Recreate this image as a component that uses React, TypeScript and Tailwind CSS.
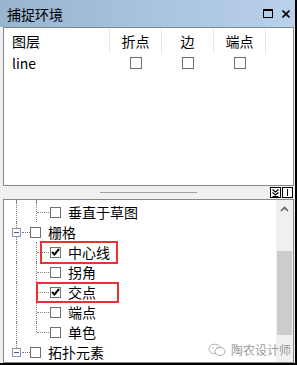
type TreeItem = {
  label: string;
  level: 1 | 2;
  checked?: boolean;
  lastChild?: boolean;
  lastRoot?: boolean;
};

const TREE_ITEMS: Array<TreeItem> = [
  { label: '垂直于草图', level: 2 },
  { label: '栅格', level: 1 },
  { label: '中心线', level: 2, checked: true },
  { label: '拐角', level: 2 },
  { label: '交点', level: 2, checked: true },
  { label: '端点', level: 2 },
  { label: '单色', level: 2, lastChild: true },
  { label: '拓扑元素', level: 1, lastRoot: true },
];

const FONT = "font-['Noto_Sans_CJK_SC','Noto_Sans',sans-serif]";

function CheckBox({ checked, size }: { checked?: boolean; size: 'sm' | 'md' }) {
  return (
    <span
      className={`flex shrink-0 items-center justify-center border border-[#707070] bg-white ${
        size === 'md' ? 'h-[12px] w-[12px]' : 'h-[11px] w-[11px]'
      }`}
    >
      {checked && (
        <svg width="9" height="8" viewBox="0 0 9 8">
          <path d="M1 4 L3.5 6.5 L8 1" fill="none" stroke="#000" strokeWidth="2" />
        </svg>
      )}
    </span>
  );
}

function MinusBox() {
  return (
    <span className="absolute left-[8px] top-[6px] flex h-[9px] w-[9px] items-center justify-center border border-[#8c99ad] bg-white">
      <span className="h-[1px] w-[5px] bg-[#3a5b95]" />
    </span>
  );
}

function TreeRow({ item }: { item: TreeItem }) {
  return (
    <div className="relative flex h-[20px] items-center">
      {/* guide lines */}
      <span
        className={`absolute left-[12px] top-0 border-l border-dotted border-[#808080] ${
          item.lastRoot ? 'h-[6px]' : 'h-[20px]'
        }`}
      />
      {item.level === 2 && (
        <>
          <span
            className={`absolute left-[32px] top-0 border-l border-dotted border-[#808080] ${
              item.lastChild ? 'h-[10px]' : 'h-[20px]'
            }`}
          />
          <span className="absolute left-[33px] top-[10px] w-[12px] border-t border-dotted border-[#808080]" />
        </>
      )}
      {item.level === 1 && (
        <>
          <MinusBox />
          <span className="absolute left-[18px] top-[10px] w-[8px] border-t border-dotted border-[#808080]" />
        </>
      )}
      <div className={`flex items-center ${item.level === 1 ? 'pl-[26px]' : 'pl-[46px]'}`}>
        <CheckBox checked={item.checked} size="sm" />
        <span className="ml-[7px] text-[14px] leading-none text-black">{item.label}</span>
      </div>
    </div>
  );
}

export default function App() {
  return (
    <div className={`flex h-[365px] w-[297px] flex-col border-b-2 border-r-2 border-black bg-[#f0f0f0] ${FONT}`}>
      {/* title bar */}
      <div className="flex h-[27px] shrink-0 items-center justify-between bg-gradient-to-r from-[#99b4d1] to-[#b9d1ea] pl-[7px] pr-[5px]">
        <span className="text-[14px] leading-none text-black">捕捉环境</span>
        <div className="flex items-center gap-[9px]">
          <span className="h-[9px] w-[10px] border border-t-2 border-black" />
          <svg width="8" height="8" viewBox="0 0 8 8">
            <path d="M0.5 0.5 L7.5 7.5 M7.5 0.5 L0.5 7.5" stroke="#000" strokeWidth="1.6" />
          </svg>
        </div>
      </div>

      <div className="flex flex-1 flex-col pl-[3px] pr-[1px]">
        {/* layer table */}
        <div className="h-[159px] shrink-0 border border-[#828790] bg-white">
          <div className="grid h-[26px] grid-cols-[106px_52px_52px_52px_1fr] text-[14px] text-black">
            <div className="my-[1px] flex items-center border-r border-[#e5e5e5] pl-[8px]">图层</div>
            <div className="my-[1px] flex items-center justify-center border-r border-[#e5e5e5]">折点</div>
            <div className="my-[1px] flex items-center justify-center border-r border-[#e5e5e5]">边</div>
            <div className="my-[1px] flex items-center justify-center border-r border-[#e5e5e5]">端点</div>
            <div />
          </div>
          <div className="grid h-[18px] grid-cols-[106px_52px_52px_52px_1fr] items-center text-[14px] text-black">
            <div className="pl-[8px] leading-none">line</div>
            <div className="flex justify-center">
              <CheckBox size="md" />
            </div>
            <div className="flex justify-center">
              <CheckBox size="md" />
            </div>
            <div className="flex justify-center">
              <CheckBox size="md" />
            </div>
            <div />
          </div>
        </div>

        {/* splitter */}
        <div className="relative flex h-[13px] shrink-0 items-start">
          <span className="ml-[97px] mt-[6px] h-[1px] w-[97px] bg-[#a0a0a0]" />
          <div className="absolute right-[1px] top-[1px] flex gap-[1px]">
            <span className="flex h-[11px] w-[11px] items-center justify-center border border-black bg-white">
              <svg width="7" height="8" viewBox="0 0 7 8">
                <path d="M0.5 0.5 L3.5 3 L6.5 0.5 M0.5 3.5 L3.5 6 L6.5 3.5 M0.5 7.5 H6.5" fill="none" stroke="#000" strokeWidth="1.2" />
              </svg>
            </span>
            <span className="flex h-[11px] w-[11px] items-center justify-center border border-black bg-white">
              <span className="h-[7px] w-[1px] bg-black" />
            </span>
          </div>
        </div>

        {/* snapping tree */}
        <div className="relative flex h-[164px] shrink-0 border border-[#828790] bg-white">
          <div className="flex-1 overflow-hidden">
            <div className="relative h-[2px]">
              <span className="absolute left-[12px] top-0 h-[2px] border-l border-dotted border-[#808080]" />
              <span className="absolute left-[32px] top-0 h-[2px] border-l border-dotted border-[#808080]" />
            </div>
            {TREE_ITEMS.map((item) => (
              <TreeRow key={item.label} item={item} />
            ))}
          </div>

          <div className="flex w-[17px] shrink-0 flex-col bg-[#f0f0f0]">
            <div className="flex h-[17px] items-center justify-center">
              <svg width="9" height="6" viewBox="0 0 9 6">
                <path d="M1 5 L4.5 1.5 L8 5" fill="none" stroke="#606060" strokeWidth="1.6" />
              </svg>
            </div>
            <div className="mx-[1px] mt-[34px] h-[84px] bg-[#cdcdcd]" />
          </div>

          {/* highlight boxes */}
          <span className="absolute left-[36px] top-[41px] h-[23px] w-[78px] border-2 border-[#e8323a]" />
          <span className="absolute left-[32px] top-[82px] h-[21px] w-[83px] border-2 border-[#e8323a]" />

          {/* watermark */}
          <div className="absolute bottom-[3px] right-[2px] flex items-center gap-[5px] text-[12px] text-[#9a9a9a]">
            <svg width="18" height="14" viewBox="0 0 18 14">
              <ellipse cx="7" cy="6" rx="6" ry="4.8" fill="none" stroke="#b0b0b0" strokeWidth="1" />
              <ellipse cx="12" cy="8.5" rx="5" ry="4" fill="#fff" stroke="#b0b0b0" strokeWidth="1" />
              <circle cx="5" cy="5" r="0.8" fill="#b0b0b0" />
              <circle cx="9" cy="5" r="0.8" fill="#b0b0b0" />
            </svg>
            <span>陶农设计师</span>
          </div>
        </div>
      </div>
    </div>
  );
}
